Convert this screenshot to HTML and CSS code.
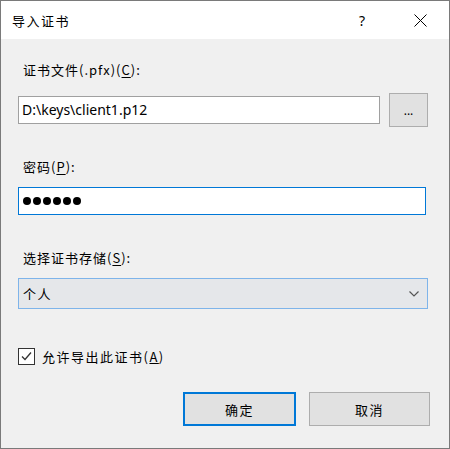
FILE: index.html
```html
<!DOCTYPE html>
<html lang="zh-CN">
<head>
  <meta charset="UTF-8" />
  <meta name="viewport" content="width=device-width, initial-scale=1.0" />
  <title>导入证书</title>
  <link rel="stylesheet" href="styles.css">
</head>
<body>

  <div class="dialog">
    <!-- Title bar -->
    <div class="titlebar">
      <span class="title">导入证书</span>
      <span class="help">?</span>
      <span class="close">
        <svg width="13" height="13" viewBox="0 0 13 13">
          <path d="M0.5 0.5 L12.5 12.5 M12.5 0.5 L0.5 12.5" stroke="#000" stroke-width="1" fill="none" />
        </svg>
      </span>
    </div>

    <div class="content">
      <label class="field-label first">证书文件(.pfx)(<u>C</u>):</label>
      <div class="file-row">
        <div class="textbox">D:\keys\client1.p12</div>
        <button class="browse">...</button>
      </div>

      <label class="field-label">密码(<u>P</u>):</label>
      <div class="textbox password focused">
        <span class="dot"></span><span class="dot"></span><span class="dot"></span>
        <span class="dot"></span><span class="dot"></span><span class="dot"></span>
      </div>

      <label class="field-label store">选择证书存储(<u>S</u>):</label>
      <div class="select">
        <span>个人</span>
        <svg width="10" height="6" viewBox="0 0 10 6">
          <path d="M0.5 0.5 L5 5 L9.5 0.5" stroke="#555" stroke-width="1.2" fill="none" />
        </svg>
      </div>

      <div class="check-row">
        <span class="checkbox">
          <svg width="13" height="13" viewBox="0 0 13 13">
            <path d="M2 6.5 L5 9.5 L11 2.5" stroke="#333" stroke-width="1.3" fill="none" />
          </svg>
        </span>
        <span class="check-label">允许导出此证书(<u>A</u>)</span>
      </div>

      <div class="buttons">
        <button class="btn default">确定</button>
        <button class="btn">取消</button>
      </div>
    </div>
  </div>

</body>
</html>
```

FILE: styles.css
```css
* {
  margin: 0;
  padding: 0;
  box-sizing: border-box;
}

body {
  font-family: "Noto Sans", "Noto Sans CJK SC", sans-serif;
  background-color: #f0f0f0;
  width: 450px;
  height: 449px;
}

.dialog {
  width: 450px;
  height: 449px;
  border: 1px solid #7a7a7a;
  background-color: #f0f0f0;
  display: flex;
  flex-direction: column;
}

.titlebar {
  height: 38px;
  flex: none;
  background-color: #fff;
  display: flex;
  align-items: center;
  padding-left: 11px;
  font-family: "Noto Sans CJK SC", sans-serif;
  font-size: 13px;
  letter-spacing: 1.5px;
  color: #000;
}

.titlebar .title {
  flex: 1;
}

.titlebar .help {
  font-family: "Noto Sans", sans-serif;
  font-size: 14px;
  letter-spacing: 0;
  width: 12px;
  margin-right: 43px;
}

.titlebar .close {
  display: flex;
  margin-right: 22px;
}

.content {
  flex: 1;
  padding: 0 21px 0 17px;
  display: flex;
  flex-direction: column;
}

.field-label {
  font-family: "Noto Sans CJK SC", sans-serif;
  font-size: 13px;
  letter-spacing: 1px;
  line-height: 16px;
  color: #000;
  padding-left: 5px;
  margin-top: 32px;
  margin-bottom: 12px;
}

.field-label.first {
  margin-top: 23px;
  margin-bottom: 15px;
}

.field-label.store {
  margin-top: 35px;
}

.field-label u {
  text-underline-offset: 2px;
}

.file-row {
  display: flex;
  align-items: center;
  gap: 9px;
}

.textbox {
  flex: 1;
  height: 28px;
  background-color: #fff;
  border: 1px solid #a0a0a0;
  font-family: "Noto Sans", sans-serif;
  font-size: 14px;
  line-height: 26px;
  padding-left: 3px;
  color: #000;
}

.textbox.password {
  flex: none;
  margin-right: 2px;
  display: flex;
  align-items: center;
  gap: 2px;
  padding-left: 4px;
}

.textbox.focused {
  border-color: #0078d7;
}

.dot {
  width: 8px;
  height: 8px;
  border-radius: 50%;
  background-color: #000;
}

.browse {
  width: 39px;
  height: 34px;
  flex: none;
  background-color: #e1e1e1;
  border: 1px solid #adadad;
  font-family: "Noto Sans", sans-serif;
  font-size: 12px;
  color: #000;
}

.select {
  height: 31px;
  flex: none;
  background-color: #e5e7ea;
  border: 1px solid #7eb4ea;
  display: flex;
  align-items: center;
  justify-content: space-between;
  padding: 0 8px 0 4px;
  font-family: "Noto Sans CJK SC", sans-serif;
  font-size: 13px;
  letter-spacing: 1.5px;
  color: #000;
}

.check-row {
  display: flex;
  align-items: center;
  margin-top: 38px;
  gap: 7px;
}

.checkbox {
  width: 17px;
  height: 17px;
  border: 1px solid #333;
  background-color: #fff;
  display: flex;
  align-items: center;
  justify-content: center;
}

.check-label {
  font-family: "Noto Sans CJK SC", sans-serif;
  font-size: 13px;
  letter-spacing: 1.5px;
  color: #000;
}

.buttons {
  display: flex;
  justify-content: flex-end;
  gap: 13px;
  margin-top: 26px;
  margin-right: -2px;
}

.btn {
  width: 121px;
  height: 34px;
  background-color: #e1e1e1;
  border: 1px solid #adadad;
  font-family: "Noto Sans CJK SC", sans-serif;
  font-size: 13px;
  letter-spacing: 1.5px;
  color: #000;
}

.btn.default {
  width: 113px;
  border: 2px solid #0078d7;
}
```
